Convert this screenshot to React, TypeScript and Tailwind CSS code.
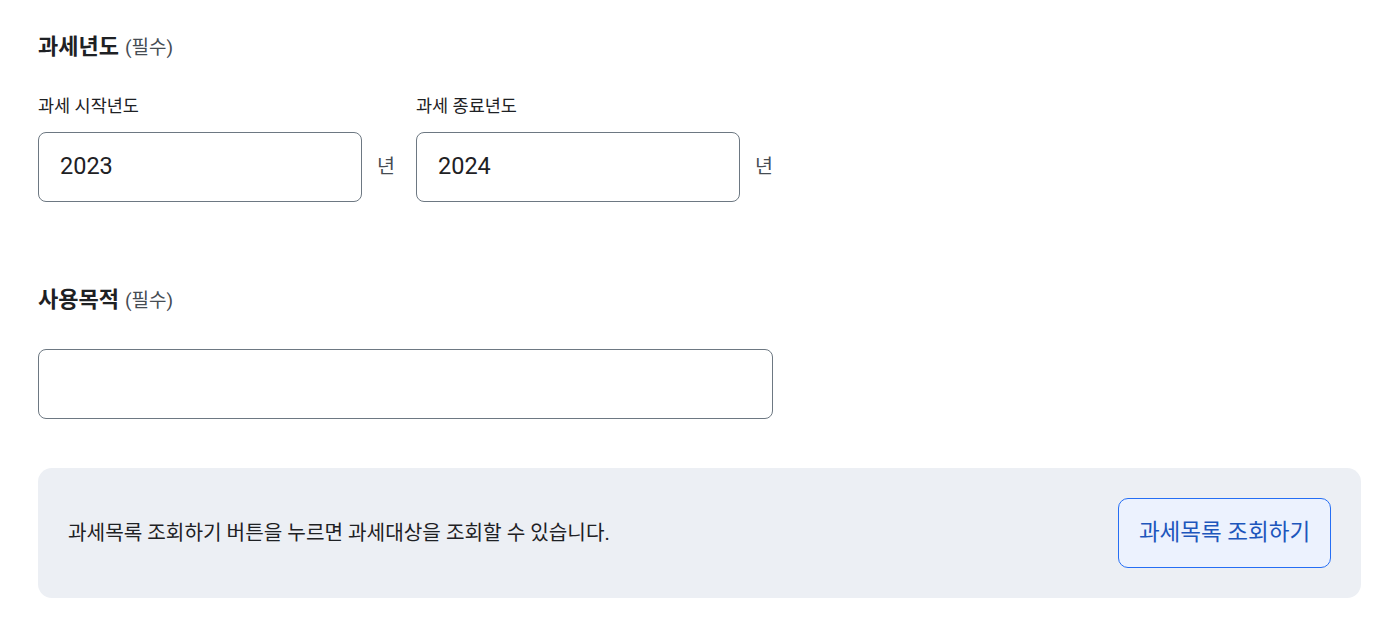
export default function App() {
  const years = [
    { label: "과세 시작년도", value: "2023" },
    { label: "과세 종료년도", value: "2024" },
  ];

  return (
    <main
      className="min-h-screen bg-white px-[38px] pt-[31px] text-[#1e2124]"
      style={{ fontFamily: 'Roboto, "Noto Sans CJK KR", sans-serif' }}
    >
      <section>
        <h2 className="flex items-baseline gap-[6px] text-[22px] leading-[32px] font-bold">
          과세년도
          <span className="text-[19px] font-normal text-[#464c53]">(필수)</span>
        </h2>
        <div className="mt-[29px] flex gap-[20px]">
          {years.map((y) => (
            <div key={y.label}>
              <p className="text-[17.5px] leading-[26px]">{y.label}</p>
              <div className="mt-[13px] flex items-center gap-[15px]">
                <div className="flex h-[70px] w-[324px] items-center rounded-[8px] border border-[#6d7882] px-[21px] text-[23.5px]">
                  {y.value}
                </div>
                <span className="w-[19px] text-[19.5px] text-[#464c53]">년</span>
              </div>
            </div>
          ))}
        </div>
      </section>

      <section className="mt-[82px]">
        <h2 className="flex items-baseline gap-[6px] text-[22px] leading-[32px] font-bold">
          사용목적
          <span className="text-[19px] font-normal text-[#464c53]">(필수)</span>
        </h2>
        <div className="mt-[32px] h-[70px] w-[735px] rounded-[8px] border border-[#6d7882]" />
      </section>

      <div className="mt-[49px] flex h-[130px] w-[1323px] items-center justify-between rounded-[14px] bg-[#eceff4] px-[30px]">
        <p className="text-[20.2px]">과세목록 조회하기 버튼을 누르면 과세대상을 조회할 수 있습니다.</p>
        <button className="flex h-[70px] w-[213px] items-center justify-center rounded-[10px] border border-[#256ef4] bg-[#ecf2fe] text-[22.5px] text-[#1d56bc]">
          과세목록 조회하기
        </button>
      </div>
    </main>
  );
}
